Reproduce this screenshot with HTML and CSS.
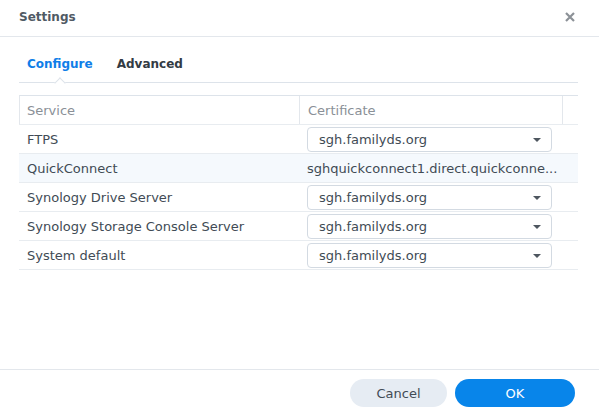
FILE: index.html
```html
<!DOCTYPE html>
<html>
<head>
<meta charset="utf-8">
<link rel="stylesheet" href="styles.css">
</head>
<body>
<div class="dialog">
  <div class="header">
    <span class="title">Settings</span>
    <svg class="close" width="10" height="10" viewBox="0 0 10 10"><path d="M1 1L9 9M9 1L1 9" stroke="#8c9197" stroke-width="2.2" stroke-linecap="butt"/></svg>
  </div>
  <div class="content">
    <div class="tabs">
      <span class="tab active">Configure<span class="notch"></span></span>
      <span class="tab">Advanced</span>
    </div>
    <div class="table">
      <div class="row head">
        <div class="cell c1">Service</div>
        <div class="cell c2">Certificate</div>
        <div class="cell c3"></div>
      </div>
      <div class="row">
        <div class="cell c1">FTPS</div>
        <div class="cell c2"><div class="select"><span>sgh.familyds.org</span><span class="arrow"></span></div></div>
      </div>
      <div class="row hl">
        <div class="cell c1">QuickConnect</div>
        <div class="cell c2 plain">sghquickconnect1.direct.quickconne...</div>
      </div>
      <div class="row">
        <div class="cell c1">Synology Drive Server</div>
        <div class="cell c2"><div class="select"><span>sgh.familyds.org</span><span class="arrow"></span></div></div>
      </div>
      <div class="row">
        <div class="cell c1">Synology Storage Console Server</div>
        <div class="cell c2"><div class="select"><span>sgh.familyds.org</span><span class="arrow"></span></div></div>
      </div>
      <div class="row">
        <div class="cell c1">System default</div>
        <div class="cell c2"><div class="select"><span>sgh.familyds.org</span><span class="arrow"></span></div></div>
      </div>
    </div>
  </div>
  <div class="footer">
    <button class="btn cancel">Cancel</button>
    <button class="btn ok">OK</button>
  </div>
</div>
</body>
</html>
```
FILE: styles.css
```css
* { box-sizing: border-box; }
html, body { margin: 0; padding: 0; background: #fff; }
body {
  font-family: "DejaVu Sans", Verdana, sans-serif;
  font-size: 13px;
  color: #414b55;
}
.dialog {
  width: 599px;
  height: 416px;
  display: flex;
  flex-direction: column;
}
.header {
  height: 37px;
  border-bottom: 1px solid #e3e7ec;
  padding: 0 24px 2px 19px;
  display: flex;
  align-items: center;
  justify-content: space-between;
}
.title {
  font-weight: bold;
  font-size: 12px;
  color: #505a64;
}
.close { display: block; }
.content {
  flex: 1;
  padding: 0 21px 0 19px;
}
.tabs {
  height: 46px;
  border-bottom: 1px solid #dde3ea;
  display: flex;
  align-items: flex-start;
  padding: 20px 0 0 8px;
  gap: 24px;
}
.tab {
  position: relative;
  font-weight: bold;
  font-size: 12px;
  line-height: 15px;
  color: #333b44;
}
.tab.active { color: #0f7ee8; }
.notch {
  position: absolute;
  left: 29px;
  top: 22px;
  width: 8px;
  height: 8px;
  background: #fff;
  border-top: 1px solid #dde3ea;
  border-left: 1px solid #dde3ea;
  transform: rotate(45deg);
}
.table {
  margin-top: 12px;
}
.row {
  display: flex;
  height: 29px;
  border-bottom: 1px solid #e8ecf0;
  align-items: center;
}
.row.head {
  height: 30px;
  border-top: 1px solid #dde3ea;
  border-left: 1px solid #e3e7ec;
  align-items: stretch;
  color: #8a9097;
}
.row.head .cell {
  display: flex;
  align-items: center;
}
.row.hl { background: #f5f9fd; }
.cell {
  padding-left: 8px;
  white-space: nowrap;
}
.c1 { width: 280px; }
.row.head .c1 { width: 279px; padding-left: 7px; }
.c2 { width: 263px; padding-left: 8px; }
.row.head .c2 { border-left: 1px solid #e3e7ec; }
.c3 { width: 16px; border-left: 1px solid #e3e7ec; }
.plain { color: #414b55; }
.select {
  width: 245px;
  height: 25px;
  border: 1px solid #d3dae2;
  border-radius: 4px;
  display: flex;
  align-items: center;
  justify-content: space-between;
  padding: 0 10px 0 11px;
  background: #fff;
}
.arrow {
  width: 0;
  height: 0;
  border-left: 4px solid transparent;
  border-right: 4px solid transparent;
  border-top: 4px solid #4e565f;
  margin-top: 1px;
}
.footer {
  height: 47px;
  border-top: 1px solid #e3e7ec;
  display: flex;
  justify-content: flex-end;
  align-items: flex-start;
  padding: 9px 24px 0 0;
  gap: 8px;
}
.btn {
  font-family: inherit;
  font-size: 13px;
  height: 28px;
  border: none;
  border-radius: 14px;
  padding: 0;
}
.cancel { width: 97px; background: #e6ecf3; color: #414b55; }
.ok { width: 120px; background: #0885ea; color: #fff; }
```
